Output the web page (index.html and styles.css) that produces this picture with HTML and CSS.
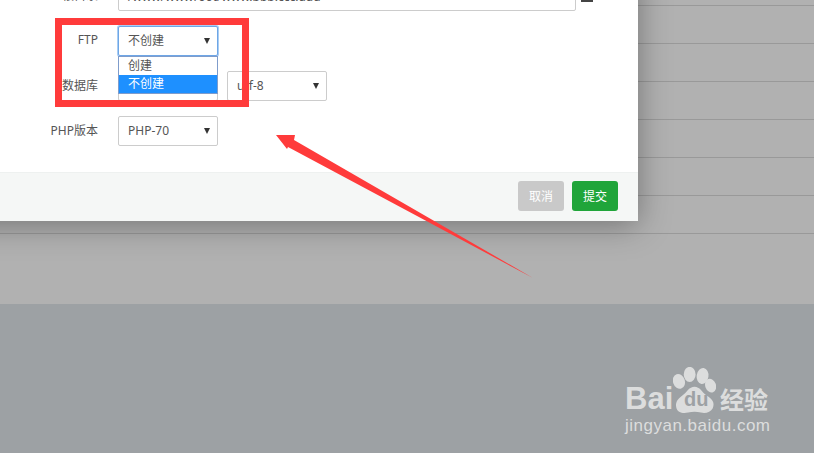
FILE: index.html
```html
<!DOCTYPE html>
<html lang="zh-CN">
<head>
    <meta charset="UTF-8">
    <meta name="viewport" content="width=device-width, initial-scale=1.0">
    <title>添加站点</title>
    <link rel="stylesheet" href="styles.css">
</head>
<body>

<div class="page">
    <div class="table">
        <div class="table-row first"></div>
        <div class="table-row"></div>
        <div class="table-row"></div>
        <div class="table-row"></div>
        <div class="table-row"></div>
        <div class="table-row"></div>
        <div class="table-row"></div>
    </div>
    <div class="band"></div>
</div>

<div class="modal">
    <div class="form">
        <div class="form-row">
            <label>根目录</label>
            <div class="input">/www/wwwroot/www.bbb.ccc.ddd</div>
            <span class="folder"></span>
        </div>
        <div class="form-row">
            <label>FTP</label>
            <div class="select focus">
                <span>不创建</span><i class="caret"></i>
                <div class="options">
                    <div class="option">创建</div>
                    <div class="option selected">不创建</div>
                </div>
            </div>
        </div>
        <div class="form-row">
            <label>数据库</label>
            <div class="select"></div>
            <div class="select"><span>utf-8</span><i class="caret"></i></div>
        </div>
        <div class="form-row">
            <label>PHP版本</label>
            <div class="select"><span>PHP-70</span><i class="caret"></i></div>
        </div>
    </div>
    <div class="modal-footer">
        <button class="btn btn-cancel">取消</button>
        <button class="btn btn-submit">提交</button>
    </div>
</div>

<!-- annotations drawn on top of the screenshot -->
<div class="red-box"></div>
<svg class="red-arrow" width="814" height="453" viewBox="0 0 814 453">
    <polygon points="276,135 295,135 294,140 533,278 288,147 287,149" fill="#ff3b3b"/>
</svg>

<div class="watermark">
    <div class="wm-top">
        <span class="wm-bai">Bai</span>
        <div class="wm-paw">
            <svg width="43" height="47" viewBox="0 0 40 43">
                <ellipse cx="5.5" cy="13" rx="5.5" ry="7" fill="#dcdddd" transform="rotate(-18 5.5 13)"/>
                <ellipse cx="15.5" cy="6.5" rx="5.5" ry="7" fill="#dcdddd"/>
                <ellipse cx="27.5" cy="8" rx="5.5" ry="7.5" fill="#dcdddd" transform="rotate(8 27.5 8)"/>
                <ellipse cx="35" cy="17" rx="5" ry="6.5" fill="#dcdddd" transform="rotate(-20 35 17)"/>
                <path d="M20 18 C25 18 27 23 31 26 C37 30 39 33 37 38 C35 42 30 43 26 42 C22 41 18 41 14 42 C9 43 4 42 3 37 C2 32 5 29 9 26 C13 23 15 18 20 18 Z" fill="#dcdddd"/>
            </svg>
            <span class="wm-du">du</span>
        </div>
        <span class="wm-jy">经验</span>
    </div>
    <div class="wm-url">jingyan.baidu.com</div>
</div>

</body>
</html>
```

FILE: styles.css
```css
html, body {
    margin: 0;
    padding: 0;
    height: 453px;
    overflow: hidden;
}
body {
    font-family: "Noto Sans", "Noto Sans CJK SC", sans-serif;
    font-size: 12px;
    color: #555;
    background: #9da1a4;
}
.page {
    height: 453px;
}
.table {
    height: 304px;
    background: #b1b1b1;
}
.table-row {
    height: 38px;
    box-sizing: border-box;
    border-bottom: 1px solid #999;
}
.table-row.first {
    height: 6px;
}
.band {
    height: 149px;
    background: #9da1a4;
}
.modal {
    position: absolute;
    top: -29px;
    left: -40px;
    width: 678px;
    background: #fff;
    box-shadow: 0 4px 30px rgba(0,0,0,0.35);
}
.form {
    padding: 10px 0 26px;
    display: flex;
    flex-direction: column;
    gap: 15px;
}
.form-row {
    display: flex;
    align-items: center;
    height: 30px;
}
.form-row label {
    width: 138px;
    margin-right: 20px;
    padding-bottom: 3px;
    text-align: right;
}
.input {
    width: 458px;
    height: 30px;
    line-height: 29px;
    box-sizing: border-box;
    padding-left: 9px;
    border: 1px solid #ccc;
    border-radius: 2px;
    white-space: nowrap;
    overflow: hidden;
}
.folder {
    width: 12px;
    height: 12px;
    margin-left: 5px;
    background: #444;
}
.select {
    position: relative;
    width: 100px;
    height: 30px;
    line-height: 27px;
    box-sizing: border-box;
    padding-left: 9px;
    margin-right: 9px;
    border: 1px solid #ccc;
    border-radius: 2px;
    background: #fff;
}
.select.focus {
    border-color: #6ea6e6;
    box-shadow: 0 0 0 1px #a9cdf4;
    z-index: 2;
}
.caret {
    position: absolute;
    right: 7px;
    top: 11px;
    width: 0;
    height: 0;
    border-left: 3.5px solid transparent;
    border-right: 3.5px solid transparent;
    border-top: 6px solid #333;
}
.options {
    position: absolute;
    top: 29px;
    left: -1px;
    width: 100px;
    box-sizing: border-box;
    border: 1px solid #7f9ccb;
    background: #fff;
}
.option {
    height: 18px;
    line-height: 18px;
    padding-left: 9px;
    color: #555;
}
.option.selected {
    background: #1e90ff;
    color: #fff;
}
.modal-footer {
    height: 49px;
    box-sizing: border-box;
    padding: 8px 20px 0 0;
    border-top: 1px solid #eef1f0;
    background: #f5f7f6;
    display: flex;
    justify-content: flex-end;
    gap: 8px;
}
.btn {
    width: 46px;
    height: 30px;
    padding: 0;
    border: none;
    border-radius: 3px;
    color: #fff;
    font-family: inherit;
    font-size: 12px;
}
.btn-cancel {
    background: #c9c9c9;
}
.btn-submit {
    background: #20a53a;
}
.red-box {
    position: absolute;
    left: 55px;
    top: 18px;
    width: 194px;
    height: 89px;
    box-sizing: border-box;
    border: 7px solid #ff3b3b;
}
.red-arrow {
    position: absolute;
    left: 0;
    top: 0;
}
.watermark {
    position: absolute;
    left: 625px;
    top: 367px;
    color: #dcdddd;
}
.wm-top {
    display: flex;
    align-items: flex-end;
    height: 47px;
}
.wm-bai {
    font-family: "Liberation Sans", sans-serif;
    font-weight: 700;
    font-size: 31px;
    line-height: 36px;
    width: 48px;
    margin-bottom: -3px;
}
.wm-paw {
    position: relative;
    width: 47px;
    height: 47px;
}
.wm-paw svg {
    display: block;
}
.wm-du {
    position: absolute;
    left: 11px;
    top: 22px;
    font-family: "Liberation Sans", sans-serif;
    font-weight: 700;
    font-size: 20px;
    line-height: 20px;
    color: #9da1a4;
}
.wm-jy {
    font-family: "Noto Sans CJK SC", sans-serif;
    font-weight: 700;
    font-size: 24px;
    line-height: 36px;
    margin-bottom: -3px;
}
.wm-url {
    font-family: "Liberation Sans", sans-serif;
    font-size: 17px;
    line-height: 20px;
    letter-spacing: 0.5px;
    white-space: nowrap;
    margin-top: 2px;
}
```
